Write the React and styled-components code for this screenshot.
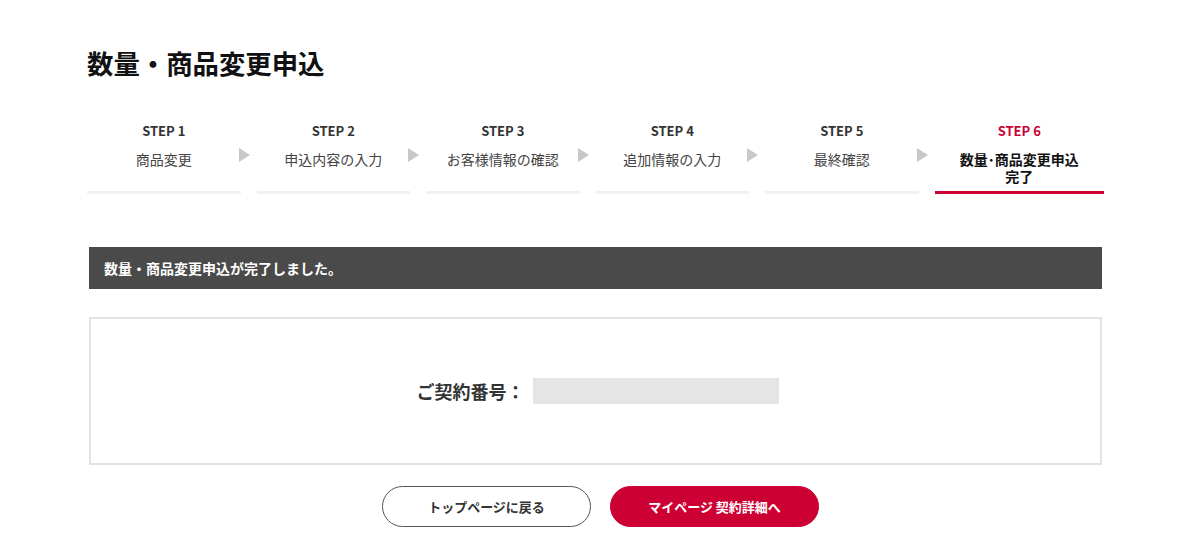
import React from 'react';
import styled, { createGlobalStyle, css } from 'styled-components';

const steps = [
  { label: 'STEP 1', name: '商品変更' },
  { label: 'STEP 2', name: '申込内容の入力' },
  { label: 'STEP 3', name: 'お客様情報の確認' },
  { label: 'STEP 4', name: '追加情報の入力' },
  { label: 'STEP 5', name: '最終確認' },
  { label: 'STEP 6', name: '数量･商品変更申込\n完了', active: true },
];

const App = () => {
  return (
    <>
      <GlobalStyle />
      <Page>
        <Title>数量・商品変更申込</Title>
        <StepList>
          {steps.map((step, i) => (
            <StepItem key={step.label}>
              <StepInner active={step.active}>
                <StepLabel active={step.active}>{step.label}</StepLabel>
                <StepName active={step.active}>{step.name}</StepName>
              </StepInner>
              {i < steps.length - 1 && <Arrow />}
            </StepItem>
          ))}
        </StepList>
        <NoticeBar>数量・商品変更申込が完了しました。</NoticeBar>
        <ResultBox>
          <ContractRow>
            <ContractLabel>ご契約番号：</ContractLabel>
            <ContractValue />
          </ContractRow>
        </ResultBox>
        <ButtonRow>
          <Button>トップページに戻る</Button>
          <Button primary>マイページ 契約詳細へ</Button>
        </ButtonRow>
      </Page>
    </>
  );
};

export default App;

const GlobalStyle = createGlobalStyle`
  body {
    margin: 0;
    background: #fff;
    font-family: "Noto Sans CJK JP", "Noto Sans", sans-serif;
    color: #333;
  }
`;

const Page = styled.div`
  padding: 43px 96px 20px 87px;
`;

const Title = styled.h1`
  margin: 0;
  font-size: 26.4px;
  font-weight: 700;
  line-height: 39px;
  color: #111;
`;

const StepList = styled.ol`
  display: flex;
  list-style: none;
  margin: 39px 0 0;
  padding: 0;
`;

const StepItem = styled.li`
  flex: 1 1 0;
  display: flex;
  min-width: 0;
`;

const StepInner = styled.div`
  flex: 1;
  display: flex;
  flex-direction: column;
  align-items: center;
  padding-bottom: 6px;
  border-bottom: 3px solid ${props => (props.active ? '#cc0033' : '#f1f1f1')};
`;

const StepLabel = styled.span`
  font-size: 13px;
  font-weight: 700;
  line-height: 20px;
  color: ${props => (props.active ? '#cc0033' : '#333')};
`;

const StepName = styled.span`
  margin-top: 10px;
  font-size: 14px;
  line-height: 17px;
  text-align: center;
  white-space: pre-line;
  color: ${props => (props.active ? '#111' : '#444')};
  font-weight: ${props => (props.active ? 700 : 400)};
`;

const Arrow = styled.span`
  align-self: flex-start;
  width: 0;
  height: 0;
  margin: 27px 7px 0 -2px;
  border-left: 11px solid #c8c8c8;
  border-top: 7px solid transparent;
  border-bottom: 7px solid transparent;
`;

const NoticeBar = styled.div`
  display: flex;
  align-items: center;
  height: 42px;
  margin: 53px 2px 0;
  padding-left: 15px;
  background: #4a4a4a;
  color: #fff;
  font-size: 14px;
  font-weight: 700;
`;

const ResultBox = styled.div`
  display: flex;
  align-items: center;
  justify-content: center;
  box-sizing: border-box;
  height: 148px;
  margin: 28px 2px 0;
  border: 2px solid #e3e3e3;
`;

const ContractRow = styled.div`
  display: flex;
  align-items: center;
  margin-left: 4px;
`;

const ContractLabel = styled.span`
  font-size: 18px;
  font-weight: 700;
  color: #333;
`;

const ContractValue = styled.span`
  width: 246px;
  height: 26px;
  margin-left: 8px;
  background: #e5e5e5;
`;

const ButtonRow = styled.div`
  display: flex;
  justify-content: center;
  gap: 19px;
  margin-top: 21px;
  padding-left: 10px;
`;

const Button = styled.button`
  box-sizing: border-box;
  width: 209px;
  height: 41px;
  border-radius: 21px;
  font-family: inherit;
  font-size: 13px;
  font-weight: 700;
  cursor: pointer;
  ${props =>
    props.primary
      ? css`
          background: #cc0033;
          border: 1px solid #cc0033;
          color: #fff;
        `
      : css`
          background: #fff;
          border: 1px solid #555;
          color: #333;
        `}
`;
